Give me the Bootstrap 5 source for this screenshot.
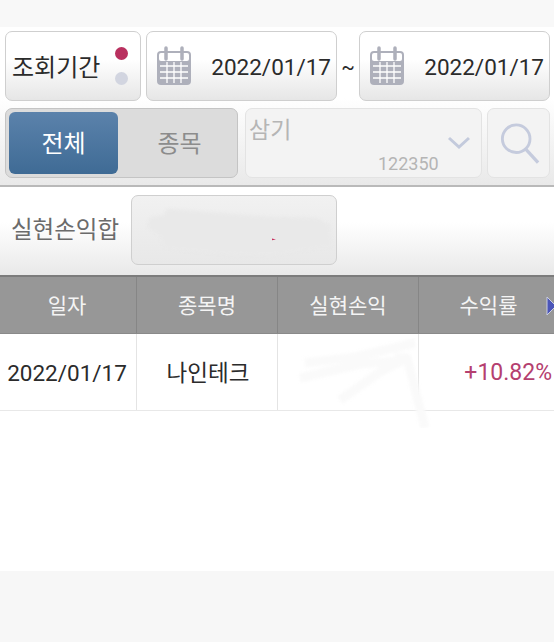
<!DOCTYPE html>
<html lang="ko">
<head>
    <meta charset="UTF-8">
    <meta name="viewport" content="width=device-width, initial-scale=1.0">
    <title>실현손익</title>
    <link href="https://cdn.jsdelivr.net/npm/bootstrap@5.3.2/dist/css/bootstrap.min.css" rel="stylesheet">
    <style>
        html, body { height: 642px; overflow: hidden; }
        body { background: #fff; font-family: Roboto, "Noto Sans CJK KR", sans-serif; color: #2b2b2b; }
        .app-screen { width: 554px; height: 642px; }
        .top-band { height: 27px; background: #f8f8f8; }
        .filter-area { height: 160px; padding: 4px 4px 0 5px; background: linear-gradient(#fff, #fff 45%, #e9e9e9); border-bottom: 2px solid #b9b9b9; }
        .filter-row { height: 70px; }
        .filter-row + .filter-row { margin-top: 7px; }
        .soft-box { border: 1px solid #cfcfcf; border-radius: 7px; background: linear-gradient(#fff, #fff 40%, #e6e6e6); }
        .period-box { width: 136px; padding: 0 12px 0 6px; font-size: 24px; }
        .box-text { padding-top: 3px; }
        .dot-stack { gap: 12px; }
        .period-dot { width: 13px; height: 13px; border-radius: 50%; }
        .dot-on { background: #b9305f; }
        .dot-off { background: #d2d5e0; }
        .date-box { width: 191px; padding: 0 5px 0 9px; font-size: 22.5px; }
        .date-first { margin-left: 5px; }
        .tilde { width: 22px; padding-top: 1px; font-size: 20px; text-align: center; }
        .seg-box { width: 233px; padding: 3px; background: #dcdcdc; border: 1px solid #c4c4c4; border-radius: 7px; font-size: 24px; }
        .seg-on { width: 109px; padding-top: 1px; color: #fff; border-radius: 6px; background: linear-gradient(#5b82ab, #3f6b95); }
        .seg-off { padding: 1px 0 0 7px; color: #8c8c8c; }
        .stock-box { width: 237px; margin-left: 7px; border: 1px solid #e3e3e3; border-radius: 7px; background: #f3f3f3; color: #b5b5b5; position: relative; }
        .stock-name { position: absolute; left: 3px; top: 6px; font-size: 23px; line-height: 32px; }
        .stock-code { position: absolute; left: 132px; top: 43px; font-size: 18px; line-height: 24px; }
        .stock-arrow { position: absolute; left: 201px; top: 26px; }
        .search-box { width: 63px; margin-left: 5px; border: 1px solid #e3e3e3; border-radius: 7px; background: #f3f3f3; }
        .search-icon { margin-left: 3px; }
        .sum-area { height: 88px; padding: 8px 5px 0 11px; background: linear-gradient(#fff, #fff 40%, #e9e9e9); }
        .sum-label { width: 120px; height: 70px; padding-top: 1px; font-size: 23.5px; color: #6b6b6b; }
        .sum-box { width: 206px; height: 70px; border: 1px solid #cfcfcf; border-radius: 7px; background: linear-gradient(#f1f1f1, #e8e8e8); position: relative; overflow: hidden; }
        .sum-smudge { position: absolute; left: 0; top: 0; }
        .smudge-fill { filter: blur(1.5px); }
        .grid-head { height: 59px; background: #979797; border-top: 2px solid #7c7c7c; border-bottom: 1px solid #8a8a8a; color: #f4f4f4; font-size: 21px; position: relative; }
        .head-text { padding-top: 3px; }
        .grid-row { height: 77px; border-bottom: 1px solid #e8e8e8; font-size: 22.5px; position: relative; }
        .cell-a { width: 137px; }
        .cell-b { width: 141px; }
        .cell-c { width: 141px; }
        .cell-d { width: 135px; }
        .grid-head .cell-a { padding-right: 2px; }
        .grid-head .cell-d { padding-left: 4px; }
        .grid-head .cell-a, .grid-head .cell-b, .grid-head .cell-c { border-right: 1px solid #868686; }
        .grid-row .cell-a, .grid-row .cell-b, .grid-row .cell-c { border-right: 1px solid #e4e4e4; padding-top: 3px; }
        .grid-row .cell-a { padding-right: 2px; }
        .grid-row .cell-b { padding-left: 2px; }
        .rate-text { padding: 3px 2px 0 0; font-size: 23px; color: #b5406f; }
        .head-arrow { position: absolute; left: 546px; top: 19px; }
        .row-smudge { position: absolute; left: 295px; top: 4px; }
        .blank-area { height: 160px; }
        .foot-band { height: 71px; background: #f7f7f7; }
    </style>
</head>
<body>
    <div class="app-screen d-flex flex-column">
        <div class="top-band"></div>

        <div class="filter-area">
            <div class="filter-row d-flex">
                <div class="soft-box period-box d-flex align-items-center justify-content-between">
                    <span class="box-text">조회기간</span>
                    <div class="dot-stack d-flex flex-column">
                        <span class="period-dot dot-on"></span>
                        <span class="period-dot dot-off"></span>
                    </div>
                </div>
                <div class="soft-box date-box date-first d-flex align-items-center justify-content-between">
                    <svg width="36" height="40" viewBox="0 0 36 40">
                        <rect x="1" y="5" width="34" height="34" rx="4" fill="#aeb0bb"/>
                        <rect x="3" y="7" width="30" height="8" rx="2" fill="#fff"/>
                        <path d="M10 2v11M26 2v11" stroke="#aeb0bb" stroke-width="3.5" stroke-linecap="round"/>
                        <path d="M4 20h28M4 26h28M4 32h28M11 16v21M18 16v21M25 16v21" stroke="#fff" stroke-width="1.3"/>
                    </svg>
                    <span class="box-text">2022/01/17</span>
                </div>
                <div class="tilde d-flex align-items-center justify-content-center">~</div>
                <div class="soft-box date-box d-flex align-items-center justify-content-between">
                    <svg width="36" height="40" viewBox="0 0 36 40">
                        <rect x="1" y="5" width="34" height="34" rx="4" fill="#aeb0bb"/>
                        <rect x="3" y="7" width="30" height="8" rx="2" fill="#fff"/>
                        <path d="M10 2v11M26 2v11" stroke="#aeb0bb" stroke-width="3.5" stroke-linecap="round"/>
                        <path d="M4 20h28M4 26h28M4 32h28M11 16v21M18 16v21M25 16v21" stroke="#fff" stroke-width="1.3"/>
                    </svg>
                    <span class="box-text">2022/01/17</span>
                </div>
            </div>
            <div class="filter-row d-flex">
                <div class="seg-box d-flex">
                    <div class="seg-on d-flex align-items-center justify-content-center">전체</div>
                    <div class="seg-off flex-grow-1 d-flex align-items-center justify-content-center">종목</div>
                </div>
                <div class="stock-box">
                    <span class="stock-name">삼기</span>
                    <svg class="stock-arrow" width="24" height="16" viewBox="0 0 24 16"><path d="M2 3l10 9 10-9" fill="none" stroke="#c3cadc" stroke-width="3"/></svg>
                    <span class="stock-code">122350</span>
                </div>
                <div class="search-box d-flex align-items-center justify-content-center">
                    <svg class="search-icon" width="40" height="43" viewBox="0 0 42 44"><circle cx="17" cy="17" r="14.5" fill="none" stroke="#c5cbdd" stroke-width="3"/><path d="M27 28l13 14" stroke="#c5cbdd" stroke-width="3.5"/></svg>
                </div>
            </div>
        </div>

        <div class="sum-area d-flex">
            <div class="sum-label d-flex align-items-center">실현손익합</div>
            <div class="sum-box">
                <svg class="sum-smudge" width="206" height="70" viewBox="0 0 207 71">
                    <path class="smudge-fill" d="M17 22l14-3 4-6 100 8 50 1 15 7 1 22-60 9-50-1-60-6-3-12-14-10z" fill="#e9e9e9"/>
                    <path d="M141 43l4 1-4 1z" fill="#c8305f"/>
                </svg>
            </div>
        </div>

        <div class="grid-head d-flex">
            <div class="cell-a head-text d-flex align-items-center justify-content-center">일자</div>
            <div class="cell-b head-text d-flex align-items-center justify-content-center">종목명</div>
            <div class="cell-c head-text d-flex align-items-center justify-content-center">실현손익</div>
            <div class="cell-d head-text d-flex align-items-center justify-content-center">수익률</div>
            <svg class="head-arrow" width="8" height="20" viewBox="0 0 8 20"><path d="M1 1l9 9-9 9z" fill="#4b55b8" stroke="#c9cde0" stroke-width="1"/></svg>
        </div>
        <div class="grid-row d-flex">
            <div class="cell-a d-flex align-items-center justify-content-center">2022/01/17</div>
            <div class="cell-b d-flex align-items-center justify-content-center">나인테크</div>
            <div class="cell-c"></div>
            <div class="cell-d d-flex align-items-center justify-content-end rate-text">+10.82%</div>
            <svg class="row-smudge" width="150" height="90" viewBox="0 0 150 90">
                <path class="smudge-fill" d="M10 25l50-6 60-14M5 40l60-14 50-4M45 62l40-28 20-10M100 20l12 0 18 70" fill="none" stroke="#fafafa" stroke-width="9" stroke-linejoin="round"/>
            </svg>
        </div>
        <div class="blank-area"></div>
        <div class="foot-band"></div>
    </div>
</body>
</html>
